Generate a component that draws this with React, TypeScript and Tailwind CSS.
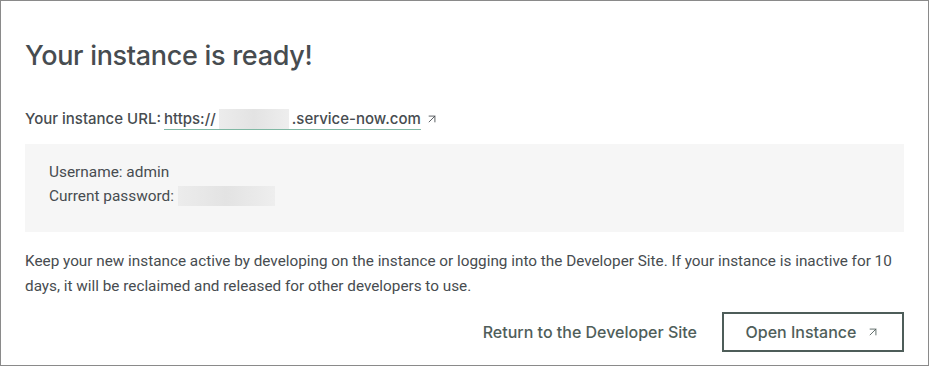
import { ArrowUpRight } from 'lucide-react';

const heading = { fontFamily: 'Inter, "Noto Sans", sans-serif' };
const body = { fontFamily: 'Roboto, "Noto Sans", sans-serif' };

function Redacted({ className }: { className: string }) {
  return (
    <span
      className={`inline-block bg-gradient-to-r from-[#ececec] via-[#e3e3e3] to-[#eeeeee] align-middle ${className}`}
    />
  );
}

export default function App() {
  return (
    <div className="h-[366px] w-[929px] border border-[#8a8a8a] bg-white text-[#474c50]">
      <div className="px-6 pt-[37px]">
        <h1 className="text-[27px] leading-[36px] font-medium tracking-[-0.3px]" style={heading}>
          Your instance is ready!
        </h1>

        <p className="mt-[33px] flex items-center text-[15px] font-medium leading-6" style={heading}>
          <span>Your instance URL:</span>
          <span className="ml-[3px] flex items-center border-b border-[#80b8a4] leading-5">
            https://
            <Redacted className="mx-[3px] h-[20px] w-[70px]" />
            .service-now.com
          </span>
          <ArrowUpRight className="ml-[4px] h-[14px] w-[14px]" strokeWidth={1.5} />
        </p>

        <div className="mt-[13px] bg-[#f6f6f6] px-6 pt-4 pb-6 text-[15.4px] leading-6" style={body}>
          <div>Username: admin</div>
          <div className="flex items-center">
            Current password:
            <Redacted className="ml-[4px] h-[20px] w-[97px]" />
          </div>
        </div>

        <p className="mt-[17px] whitespace-nowrap text-[15.3px] leading-[25px]" style={body}>
          Keep your new instance active by developing on the instance or logging into the Developer Site. If your instance is inactive for 10
          <br />
          days, it will be reclaimed and released for other developers to use.
        </p>

        <div className="mt-[13px] flex items-center justify-end gap-[25px]" style={heading}>
          <a className="text-[16px] font-medium text-[#4f5e5a]">Return to the Developer Site</a>
          <button className="flex h-[40px] w-[182px] items-center justify-center border-2 border-[#4e5d59] text-[16px] font-medium text-[#4f5e5a]">
            Open Instance
            <ArrowUpRight className="ml-[10px] h-[14px] w-[14px]" strokeWidth={1.5} />
          </button>
        </div>
      </div>
    </div>
  );
}
